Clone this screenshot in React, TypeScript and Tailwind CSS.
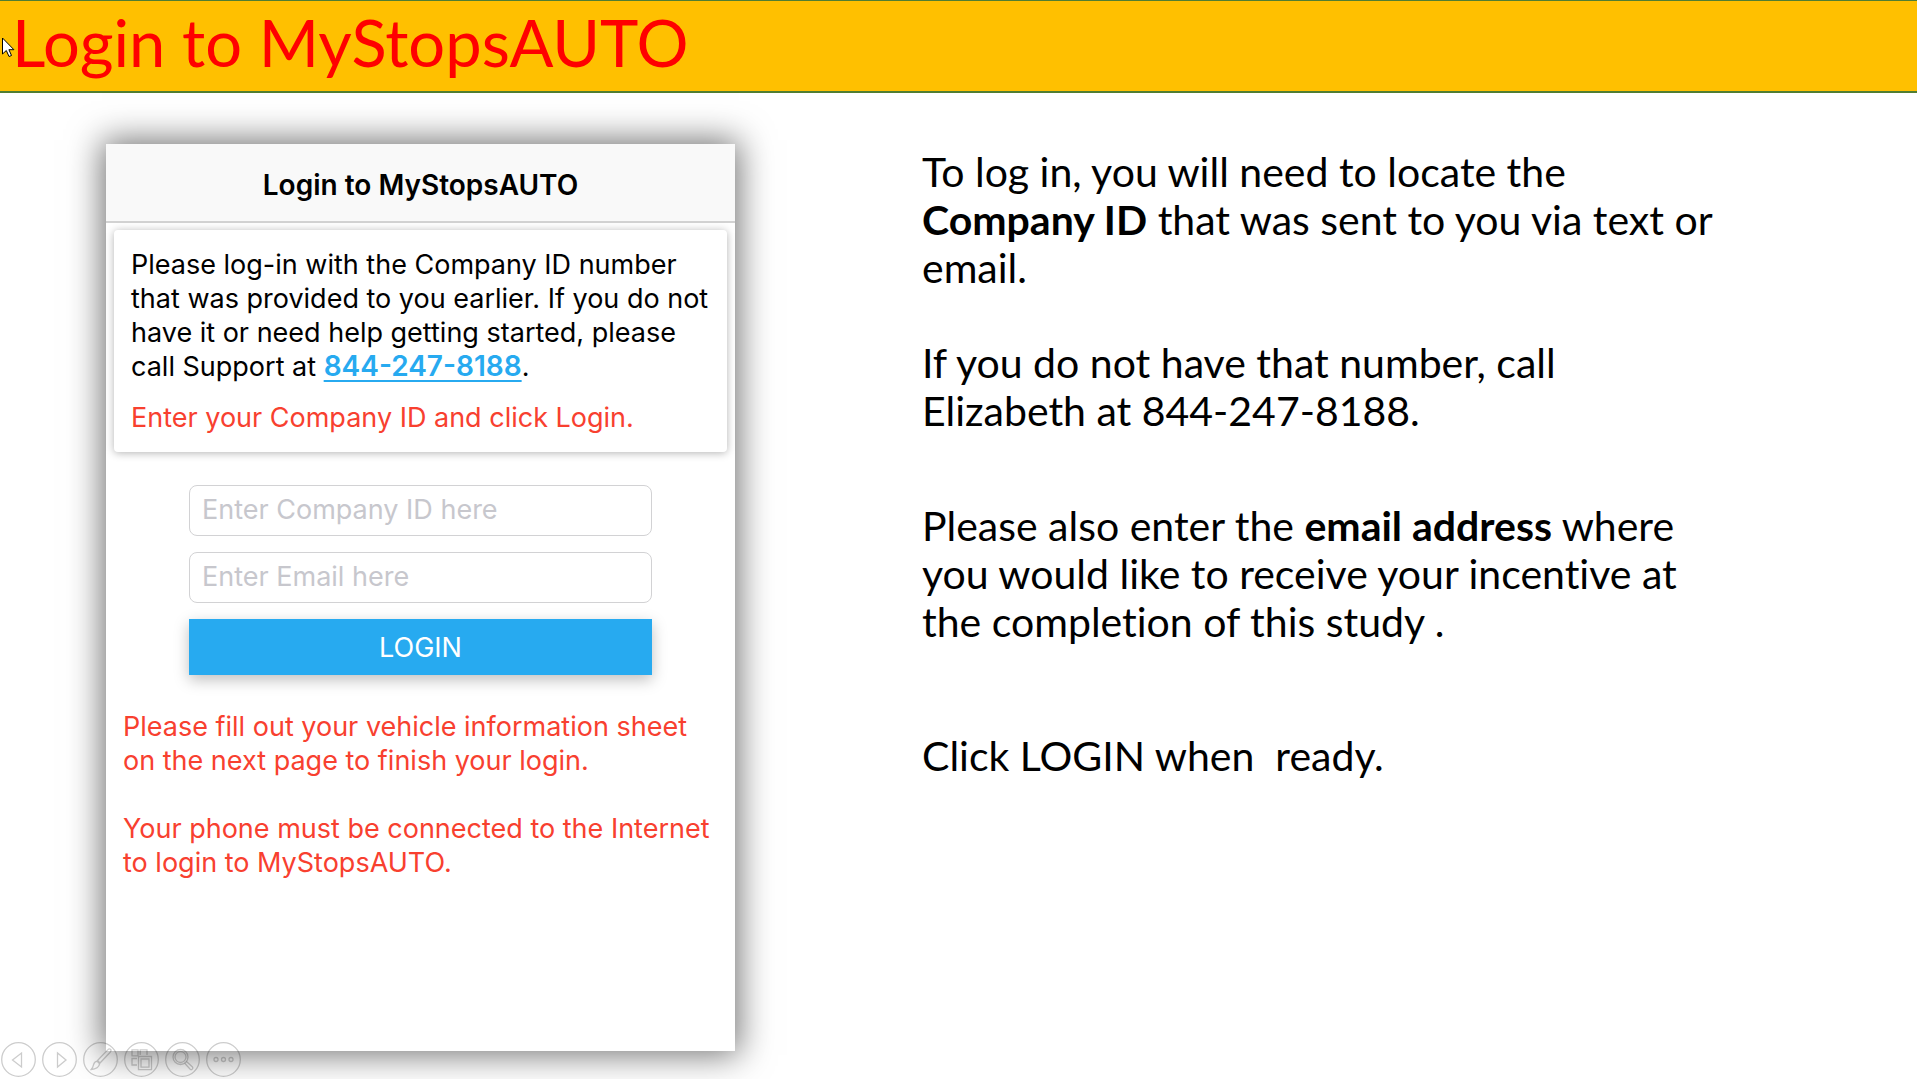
import React from "react";

interface SlideButtonProps {
  label: string;
  children: React.ReactNode;
}

const SlideButton = ({ label, children }: SlideButtonProps) => (
  <button type="button" aria-label={label} className="block size-[35px] text-black/20">
    <svg viewBox="0 0 35 35" className="size-full" fill="none" stroke="currentColor" strokeWidth="1.3">
      <circle cx="17.5" cy="17.5" r="16.8" />
      {children}
    </svg>
  </button>
);

const SlideControls = () => (
  <nav aria-label="Slide show" className="fixed bottom-[2px] left-px flex gap-[6px]">
    <SlideButton label="Previous slide">
      <path d="M20.5 11v14L11.5 18z" />
    </SlideButton>
    <SlideButton label="Next slide">
      <path d="M15.5 11v14L24 18z" />
    </SlideButton>
    <SlideButton label="Pen">
      <path d="M27.500 7.300c-1-.8-2-.3-2.800.6L14.500 18.500l2.500 2.500L27.200 10.200c.9-1 1.200-2 .3-2.900zM14.200 19.200c-2 .3-3.200 1.500-3.700 3.600-.3 1.500-1 3.200-2.300 4.700 3.200-.2 7.600-1.200 8.500-5.800z" />
    </SlideButton>
    <SlideButton label="All slides">
      <path d="M8 7.800h6v6H8zM16.200 13V7.800h6.800V13M13 23H8v-6.500h5M14.500 14.500h13v13.200h-13zM17 17h8v8.200h-8z" />
    </SlideButton>
    <SlideButton label="Zoom">
      <circle cx="15.500" cy="15" r="7.500" />
      <circle cx="15.500" cy="15" r="5.500" />
      <path d="M21.500 19.500l6 5.500c1.200 1.500-.8 3.500-2.300 2.300l-5.500-6" />
    </SlideButton>
    <SlideButton label="More options">
      <circle cx="10" cy="17.500" r="2" />
      <circle cx="17.500" cy="17.500" r="2" />
      <circle cx="25" cy="17.500" r="2" />
    </SlideButton>
  </nav>
);

const field =
  "h-[51px] w-full rounded-lg border border-[#d2d2d4] bg-white px-3 pb-[2px] text-[27px] outline-none placeholder:text-[#c7c7cd] placeholder:opacity-100";

const PhoneScreen = () => (
  <section className="min-h-[907px] bg-white font-['Inter',sans-serif] text-[27px] leading-[34px] shadow-[0_0_32px_4px_rgba(0,0,0,0.55)]">
    <div className="flex h-[79px] items-center justify-center border-b-2 border-[#d2d2d2] bg-[#f9f9f9] pt-1">
      <h2 className="text-[28px] font-semibold">Login to MyStopsAUTO</h2>
    </div>

    <div className="mx-2 mt-[7px] rounded-sm bg-white px-[17px] pt-[18px] pb-[17px] shadow-[0_1px_8px_rgba(0,0,0,0.3)]">
      <p>
        Please log-in with the Company ID number that was provided to you earlier. If you do not have it or need help
        getting started, please call Support at{" "}
        <a
          href="tel:844-247-8188"
          className="text-[28px] leading-none font-semibold text-[#27aaf0] underline decoration-2 underline-offset-4"
        >
          844-247-8188
        </a>
        .
      </p>
      <p className="mt-[17px] text-[#f8402f]">Enter your Company ID and click Login.</p>
    </div>

    <form className="mx-[83px] mt-[33px] flex flex-col gap-4" onSubmit={(e) => e.preventDefault()}>
      <input aria-label="Company ID" placeholder="Enter Company ID here" className={field} />
      <input aria-label="Email" type="email" placeholder="Enter Email here" className={field} />
      <button type="submit" className="h-14 w-full bg-[#27aaf0] pt-[2px] text-white shadow-[0_5px_14px_rgba(0,0,0,0.25)]">
        LOGIN
      </button>
    </form>

    <div className="mt-[35px] flex flex-col gap-[34px] px-[17px] text-[#f8402f]">
      <p>Please fill out your vehicle information sheet on the next page to finish your login.</p>
      <p>Your phone must be connected to the Internet to login to MyStopsAUTO.</p>
    </div>
  </section>
);

const Instructions = () => (
  <section className="pt-1 text-[41px] leading-[48px] [font-variant-ligatures:none]">
    <p>
      To log in, you will need to locate the <strong>Company ID</strong> that was sent to you via text or email.
    </p>
    <p className="mt-[47px]">If you do not have that number, call Elizabeth at 844-247-8188.</p>
    <p className="mt-[67px]">
      Please also enter the <strong>email address</strong> where you would like to receive your incentive at the
      completion of this study .
    </p>
    <p className="mt-[86px] whitespace-pre-wrap">Click LOGIN when{"  "}ready.</p>
  </section>
);

const App = () => (
  <div className="min-h-screen overflow-hidden bg-white font-['Lato',sans-serif] text-black">
    <header className="flex h-[93px] items-center border-t border-b-2 border-[#507e32] bg-[#ffc000] px-3 pb-2">
      <h1 className="text-[65px] leading-none text-[#ff0000]">Login to MyStopsAUTO</h1>
      {/* Mouse pointer resting over the title */}
      <svg className="absolute top-[37px] left-[2px] h-[21px] w-[13px]" viewBox="0 0 13 21" aria-hidden="true">
        <path d="M.5 1v16l3.800-3.500 2.700 6 2.500-1-2.600-5.800h5z" fill="#fff" stroke="#000" />
      </svg>
    </header>

    <main className="grid grid-cols-[629fr_799fr] gap-[187px] pt-[51px] pr-[196px] pb-7 pl-[106px]">
      <PhoneScreen />
      <Instructions />
    </main>

    <SlideControls />
  </div>
);

export default App;
